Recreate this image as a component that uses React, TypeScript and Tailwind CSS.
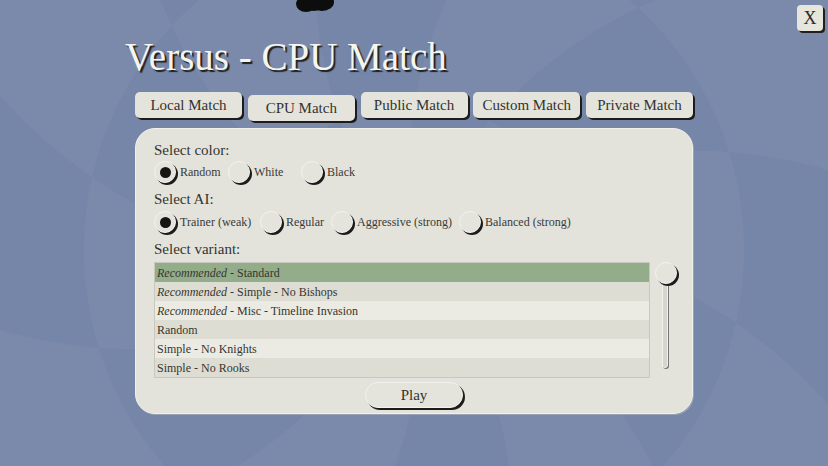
import React from "react";

const CX = 414;
const CY = 250;
const RINGS = [0, 150, 330, 760];
const SECTORS = 12;
const TWIST = 0.0012;

// one cell of a swirled polar checkerboard
const cellPath = (r1: number, r2: number, a1: number, a2: number) => {
  const pts: string[] = [];
  const pt = (r: number, a: number) => {
    const t = a + TWIST * r;
    return `${(CX + r * Math.cos(t)).toFixed(1)},${(CY + r * Math.sin(t)).toFixed(1)}`;
  };
  const steps = 16;
  for (let k = 0; k <= steps; k++) pts.push(pt(r1 + ((r2 - r1) * k) / steps, a1));
  for (let k = 0; k <= steps; k++) pts.push(pt(r2, a1 + ((a2 - a1) * k) / steps));
  for (let k = 0; k <= steps; k++) pts.push(pt(r2 - ((r2 - r1) * k) / steps, a2));
  for (let k = 0; k <= steps; k++) pts.push(pt(r1, a2 - ((a2 - a1) * k) / steps));
  return "M" + pts.join("L") + "Z";
};

const Backdrop = () => {
  const cells: string[] = [];
  for (let i = 0; i < RINGS.length - 1; i++) {
    for (let j = 0; j < SECTORS; j++) {
      if ((i + j) % 2 === 0) continue;
      const a1 = (j * 2 * Math.PI) / SECTORS + 0.35;
      const a2 = ((j + 1) * 2 * Math.PI) / SECTORS + 0.35;
      cells.push(cellPath(RINGS[i], RINGS[i + 1], a1, a2));
    }
  }
  return (
    <svg className="absolute inset-0" width="828" height="466" viewBox="0 0 828 466">
      {cells.map((d, i) => (
        <path key={i} d={d} fill="#ffffff" fillOpacity="0.04" />
      ))}
    </svg>
  );
};

const Radio = ({ label, checked = false, className = "" }: { label: string; checked?: boolean; className?: string }) => (
  <div className={`flex items-center ${className}`}>
    <span className="flex h-[22px] w-[22px] shrink-0 items-center justify-center rounded-full border border-[#f3f3ee] bg-[#e4e4dd] shadow-[2px_2px_0_#1c1c1c]">
      {checked && <span className="h-[11px] w-[11px] rounded-full bg-[#151515]" />}
    </span>
    <span className="ml-[4px] text-[12px] text-[#3a3a36]">{label}</span>
  </div>
);

const tabs = ["Local Match", "CPU Match", "Public Match", "Custom Match", "Private Match"];

const variants = [
  { rec: true, name: "Standard" },
  { rec: true, name: "Simple - No Bishops" },
  { rec: true, name: "Misc - Timeline Invasion" },
  { rec: false, name: "Random" },
  { rec: false, name: "Simple - No Knights" },
  { rec: false, name: "Simple - No Rooks" },
];

const rowColor = ["bg-[#93ad8b]", "bg-[#deddd3]", "bg-[#ebebe3]", "bg-[#deddd3]", "bg-[#ebebe3]", "bg-[#deddd3]"];

export default function App() {
  return (
    <div className="relative h-[466px] w-[828px] overflow-hidden bg-[#7686a8] font-['Liberation_Serif',serif]">
      <Backdrop />

      {/* piece peeking in from the top */}
      <svg className="absolute left-[292px] top-0" width="46" height="14" viewBox="0 0 46 14">
        <ellipse cx="14" cy="4" rx="10" ry="8" fill="#0d0d0d" />
        <ellipse cx="30" cy="2" rx="12" ry="9" fill="#0d0d0d" />
        <ellipse cx="22" cy="5" rx="8" ry="6" fill="#0d0d0d" />
      </svg>

      <button className="absolute right-[5px] top-[5px] flex h-[26px] w-[26px] items-center justify-center rounded-[4px] bg-[#e6e6dd] text-[18px] text-[#2b2b28] shadow-[2px_2px_0_#1f1f1f]">
        X
      </button>

      <div className="relative flex w-[693px] flex-col pl-[135px] pt-[34px]">
        <h1 className="-ml-[10px] text-[39px] leading-[45px] text-[#f5f5f0] [text-shadow:2px_2px_1px_#1e1e1e]">
          Versus - CPU Match
        </h1>

        <div className="mt-[13px] flex h-[29px] items-start justify-between">
          {tabs.map((t) => (
            <div
              key={t}
              className={`flex h-[26px] w-[107px] items-center justify-center rounded-[5px] bg-[#e5e4dc] text-[15px] text-[#33332f] shadow-[2px_2px_0_#1c1c1c] ${
                t === "CPU Match" ? "mt-[3px]" : ""
              }`}
            >
              {t}
            </div>
          ))}
        </div>

        <div className="mt-[7px] flex h-[286px] flex-col rounded-[20px] border border-[#f1f1ec] bg-[#e3e3dc] pl-[18px] pt-[11px] shadow-[1px_1px_0_#9aa3b5]">
          <div className="text-[15px] leading-[20px] text-[#34342f]">Select color:</div>
          <div className="mt-[1px] flex h-[22px] items-center">
            <Radio label="Random" checked className="w-[74px]" />
            <Radio label="White" className="w-[73px]" />
            <Radio label="Black" />
          </div>

          <div className="mt-[6px] text-[15px] leading-[20px] text-[#34342f]">Select AI:</div>
          <div className="mt-[2px] flex h-[22px] items-center">
            <Radio label="Trainer (weak)" checked className="w-[106px]" />
            <Radio label="Regular" className="w-[71px]" />
            <Radio label="Aggressive (strong)" className="w-[128px]" />
            <Radio label="Balanced (strong)" />
          </div>

          <div className="mt-[6px] text-[15px] leading-[20px] text-[#34342f]">Select variant:</div>

          <div className="mt-[3px] flex items-start">
            <div className="flex w-[496px] flex-col border border-[#c8c8bf]">
              {variants.map((v, i) => (
                <div
                  key={v.name}
                  className={`flex h-[19px] items-center pl-[2px] text-[12px] text-[#36362f] ${rowColor[i]}`}
                >
                  {v.rec && (
                    <>
                      <span className="italic">Recommended</span>
                      <span>&nbsp;-&nbsp;</span>
                    </>
                  )}
                  <span>{v.name}</span>
                </div>
              ))}
            </div>

            <div className="relative ml-[5px] h-[108px] w-[22px]">
              <div className="absolute left-[7px] top-[16px] h-[90px] w-[6px] rounded-full border border-[#f1f1ec] bg-[#d6d6ce] shadow-[1px_1px_0_#777]" />
              <div className="absolute left-0 top-0 h-[22px] w-[22px] rounded-full border border-[#f3f3ee] bg-[#e4e4dd] shadow-[2px_2px_0_#1c1c1c]" />
            </div>
          </div>

          <div className="-ml-[18px] mt-[4px] flex justify-center">
            <button className="h-[26px] w-[98px] rounded-full border border-[#f3f3ee] bg-[#e4e4dc] text-[15px] text-[#33332f] shadow-[2px_2px_0_#1c1c1c]">
              Play
            </button>
          </div>
        </div>
      </div>
    </div>
  );
}
